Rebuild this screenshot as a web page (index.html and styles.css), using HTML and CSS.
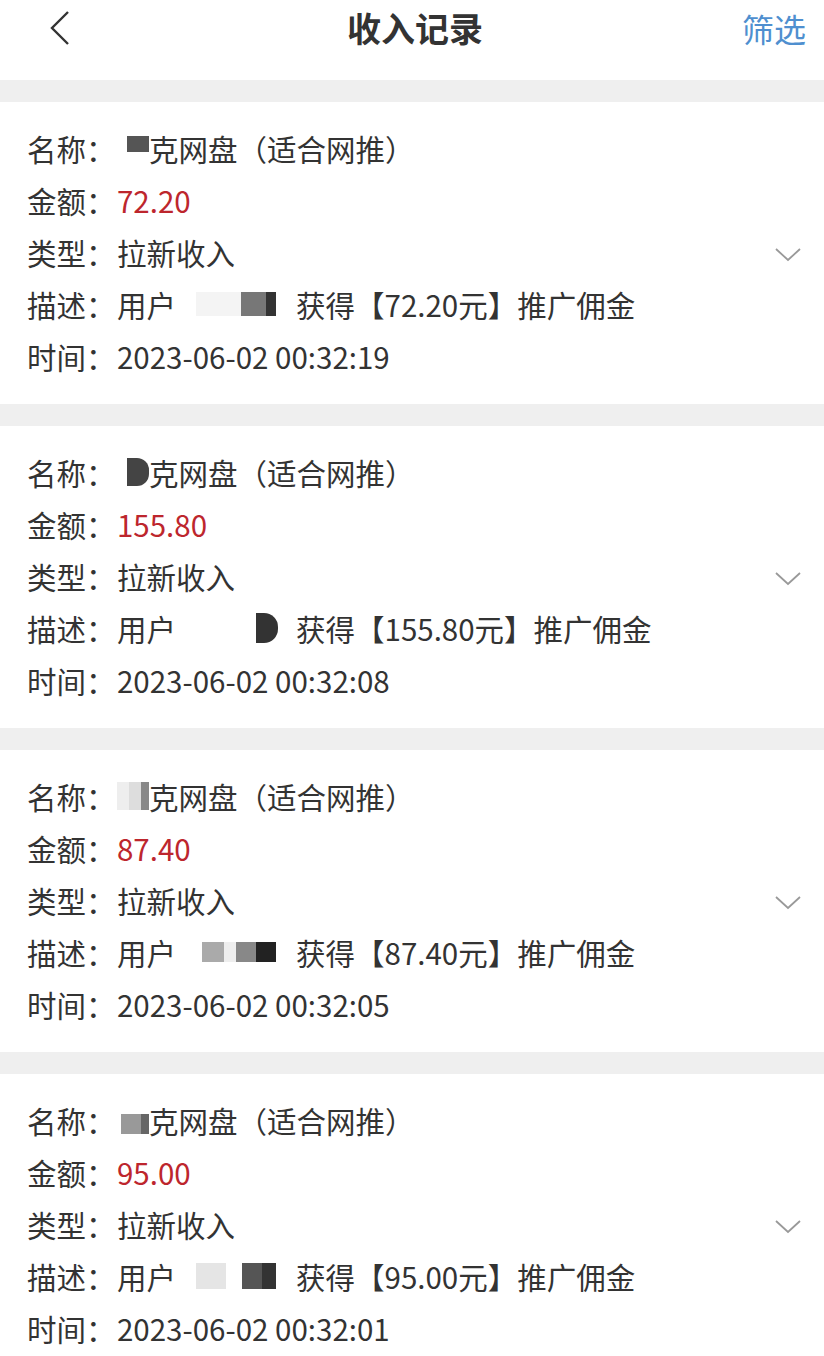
FILE: index.html
```html
<!DOCTYPE html>
<html lang="zh-CN">
<head>
    <meta charset="UTF-8">
    <meta name="viewport" content="width=device-width, initial-scale=1.0">
    <title>收入记录</title>
    <link rel="stylesheet" href="styles.css">
</head>
<body>

    <header class="topbar">
        <span class="back">
            <svg width="24" height="36" viewBox="0 0 24 36"><path d="M20 2 L4 18 L20 34" fill="none" stroke="#333" stroke-width="2.4"/></svg>
        </span>
        <h1>收入记录</h1>
        <span class="filter">筛选</span>
    </header>

    <div class="list">
        <div class="record">
            <div class="row"><span class="label">名称：</span><span class="mask m-name1"></span>克网盘（适合网推）</div>
            <div class="row"><span class="label">金额：</span><span class="amount">72.20</span></div>
            <div class="row"><span class="label">类型：</span>拉新收入</div>
            <div class="row"><span class="label">描述：</span>用户<span class="mask m-user1"></span>获得【72.20元】推广佣金</div>
            <div class="row"><span class="label">时间：</span>2023-06-02 00:32:19</div>
            <span class="arrow"><svg width="28" height="16" viewBox="0 0 28 16"><path d="M2 2 L14 13 L26 2" fill="none" stroke="#999" stroke-width="1.8"/></svg></span>
        </div>

        <div class="record">
            <div class="row"><span class="label">名称：</span><span class="mask m-name2"></span>克网盘（适合网推）</div>
            <div class="row"><span class="label">金额：</span><span class="amount">155.80</span></div>
            <div class="row"><span class="label">类型：</span>拉新收入</div>
            <div class="row"><span class="label">描述：</span>用户<span class="mask m-user2"></span>获得【155.80元】推广佣金</div>
            <div class="row"><span class="label">时间：</span>2023-06-02 00:32:08</div>
            <span class="arrow"><svg width="28" height="16" viewBox="0 0 28 16"><path d="M2 2 L14 13 L26 2" fill="none" stroke="#999" stroke-width="1.8"/></svg></span>
        </div>

        <div class="record">
            <div class="row"><span class="label">名称：</span><span class="mask m-name3"></span>克网盘（适合网推）</div>
            <div class="row"><span class="label">金额：</span><span class="amount">87.40</span></div>
            <div class="row"><span class="label">类型：</span>拉新收入</div>
            <div class="row"><span class="label">描述：</span>用户<span class="mask m-user3"></span>获得【87.40元】推广佣金</div>
            <div class="row"><span class="label">时间：</span>2023-06-02 00:32:05</div>
            <span class="arrow"><svg width="28" height="16" viewBox="0 0 28 16"><path d="M2 2 L14 13 L26 2" fill="none" stroke="#999" stroke-width="1.8"/></svg></span>
        </div>

        <div class="record">
            <div class="row"><span class="label">名称：</span><span class="mask m-name4"></span>克网盘（适合网推）</div>
            <div class="row"><span class="label">金额：</span><span class="amount">95.00</span></div>
            <div class="row"><span class="label">类型：</span>拉新收入</div>
            <div class="row"><span class="label">描述：</span>用户<span class="mask m-user4"></span>获得【95.00元】推广佣金</div>
            <div class="row"><span class="label">时间：</span>2023-06-02 00:32:01</div>
            <span class="arrow"><svg width="28" height="16" viewBox="0 0 28 16"><path d="M2 2 L14 13 L26 2" fill="none" stroke="#999" stroke-width="1.8"/></svg></span>
        </div>
    </div>

</body>
</html>
```

FILE: styles.css
```css
/* Reset */
* {
    margin: 0;
    padding: 0;
    box-sizing: border-box;
}

body {
    font-family: "Noto Sans CJK SC", "Noto Sans", sans-serif;
    background: #efefef;
    color: #333;
    width: 824px;
    height: 1356px;
    overflow: hidden;
}

/* Barra superior */
.topbar {
    height: 80px;
    background: #fff;
    display: flex;
    align-items: center;
    justify-content: center;
    position: relative;
}

.topbar h1 {
    font-size: 34px;
    font-weight: 700;
    color: #333;
    margin-top: -25px;
    margin-left: 6px;
}

.back {
    position: absolute;
    left: 48px;
    top: 10px;
}

.filter {
    position: absolute;
    right: 18px;
    top: 5px;
    font-size: 32px;
    color: #4f8fcf;
}

/* Lista */
.list {
    padding-top: 22px;
    display: flex;
    flex-direction: column;
    gap: 22px;
}

.record {
    background: #fff;
    height: 302px;
    padding: 20px 0 0 27px;
    position: relative;
}

.row {
    font-size: 29.5px;
    line-height: 52px;
    height: 52px;
    white-space: nowrap;
    display: flex;
    align-items: center;
}

.label {
    width: 90px;
}

.amount {
    color: #bd262d;
}

.arrow {
    position: absolute;
    right: 22px;
    top: 142px;
}

/* Zonas ocultas */
.mask {
    display: inline-block;
    height: 28px;
}

.m-name1 { width: 32px; background: linear-gradient(90deg, #fff 0 10px, #555 10px 32px); height: 16px; margin-top: -8px; }
.m-name2 { width: 32px; background: linear-gradient(90deg, #fff 0 10px, #444 10px 32px); border-radius: 0 12px 12px 0; }
.m-name3 { width: 32px; background: linear-gradient(90deg, #eee 0 12px, #ddd 12px 24px, #888 24px 32px); }
.m-name4 { width: 32px; background: linear-gradient(90deg, #fff 0 4px, #999 4px 24px, #666 24px 32px); height: 20px; margin-top: 8px; }
.m-user1 { width: 82px; margin: 0 18px 0 20px; background: linear-gradient(90deg, #f4f4f4 0 45px, #777 45px 70px, #333 70px 80px, #fff 80px); height: 24px; }
.m-user2 { width: 82px; margin: 0 18px 0 20px; background: linear-gradient(90deg, #fff 0 60px, #333 60px 82px); border-radius: 0 14px 14px 0; height: 30px; }
.m-user3 { width: 82px; margin: 0 18px 0 20px; background: linear-gradient(90deg, #fff 0 6px, #aaa 6px 28px, #eee 28px 40px, #888 40px 60px, #222 60px 80px, #fff 80px); height: 20px; }
.m-user4 { width: 82px; margin: 0 18px 0 20px; background: linear-gradient(90deg, #e5e5e5 0 30px, #fff 30px 46px, #555 46px 66px, #333 66px 80px, #fff 80px); height: 26px; }
```
